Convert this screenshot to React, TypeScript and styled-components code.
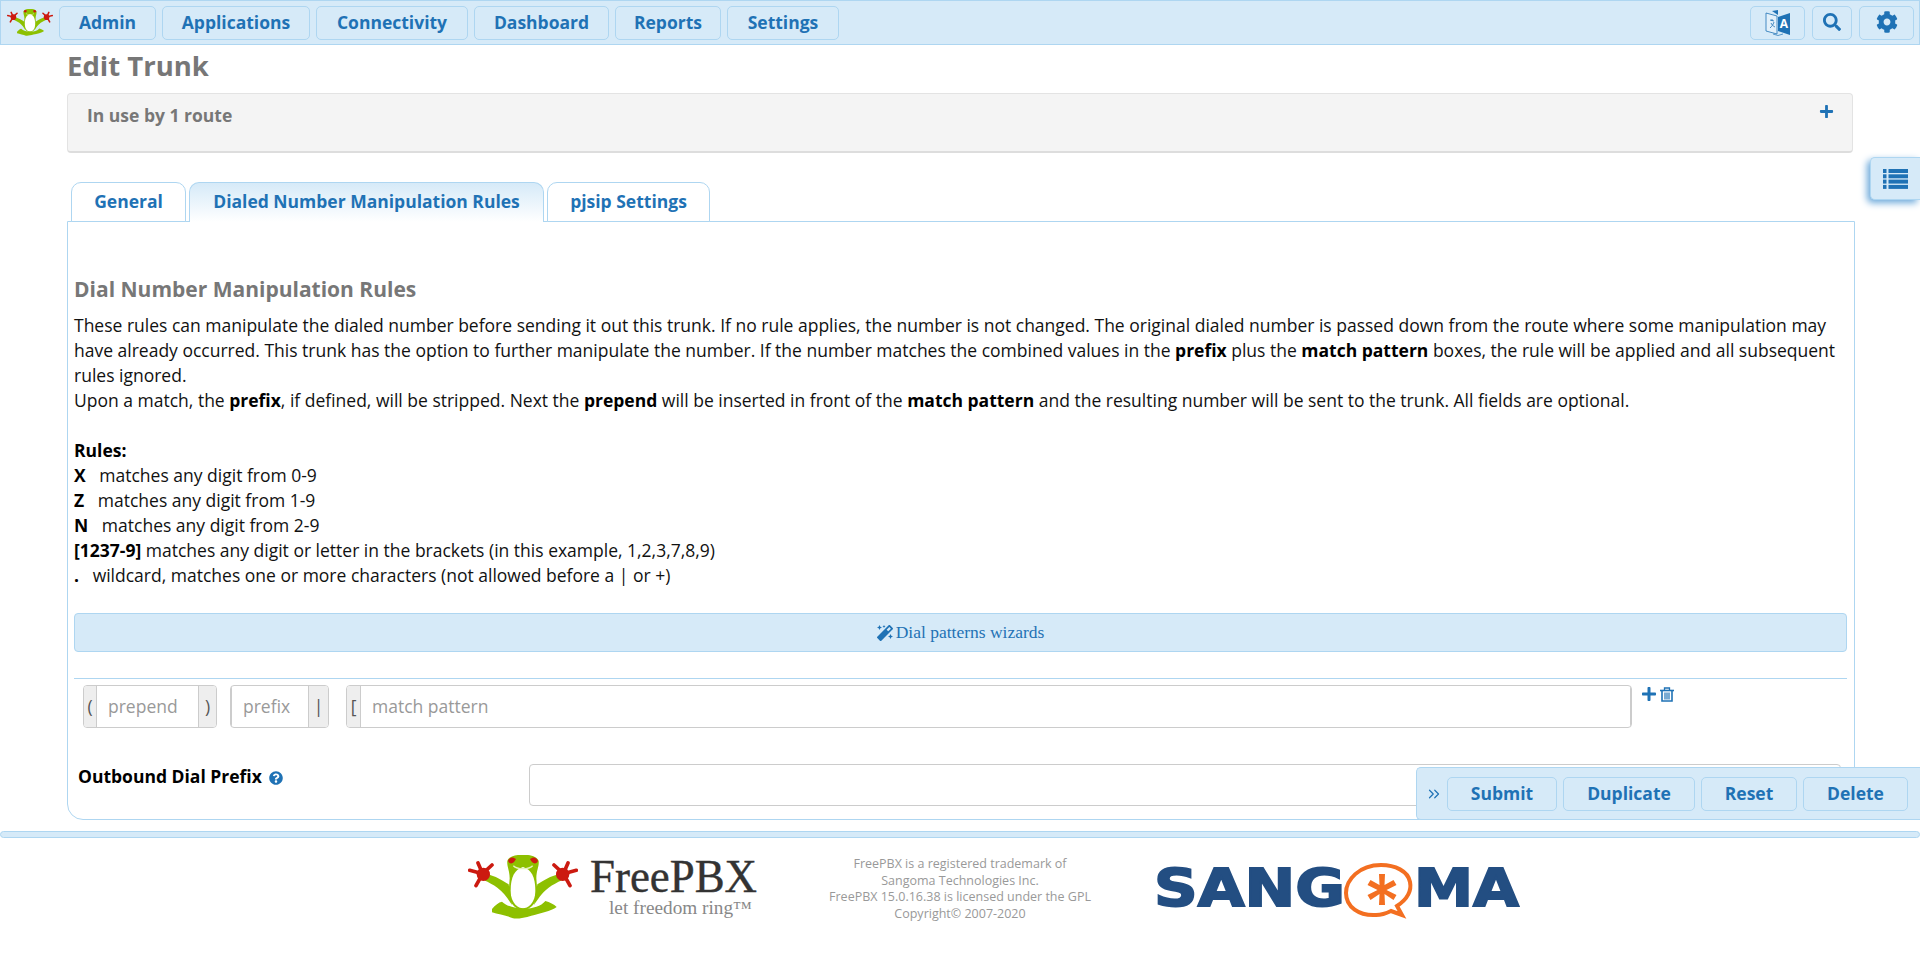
import React from 'react';
import styled, { createGlobalStyle } from 'styled-components';
import { ChevronsRight } from 'lucide-react';
import { FaCog, FaMagic, FaPlus, FaQuestionCircle, FaSearch } from 'react-icons/fa';

const blue = '#1f72b5';
const light = '#d6eaf8';
const line = '#aed6f1';

const GlobalStyle = createGlobalStyle`
	* { box-sizing: border-box; }
	html, body { margin: 0; padding: 0; background: #fff; }
	body {
		font-family: 'Open Sans', 'Liberation Sans', sans-serif;
		font-size: 17.5px;
		line-height: 25px;
		color: #111;
	}
`;

const Page = styled.div`
	position: relative;
	width: 1920px;
	height: 957px;
	overflow: hidden;
`;

const TopBar = styled.div`
	height: 45px;
	display: flex;
	align-items: center;
	padding: 0 5px 0 6px;
	background: ${light};
	border: 1px solid ${line};
`;

const Button = styled.button<{ $w: number }>`
	width: ${(p) => p.$w}px;
	height: 34px;
	padding: 0 0 2px;
	display: flex;
	align-items: center;
	justify-content: center;
	background: ${light};
	border: 1px solid ${line};
	border-radius: 5px;
	color: ${blue};
	font-family: inherit;
	font-size: 17.5px;
	font-weight: 700;
`;

const NavGroup = styled.div`
	display: flex;
	gap: 6px;
	margin-left: 6px;
`;

const RightGroup = styled.div`
	display: flex;
	gap: 7px;
	margin-left: auto;
`;

const Content = styled.div`
	width: 1788px;
	margin-left: 67px;
`;

const Title = styled.h1`
	height: 48px;
	margin: 0;
	font-size: 27.5px;
	line-height: 42px;
	font-weight: 700;
	color: #777;
`;

const InUse = styled.div`
	height: 60px;
	width: 1786px;
	display: flex;
	justify-content: space-between;
	padding: 9px 18px 9px 19px;
	background: #f4f4f4;
	border: 1px solid #e3e3e3;
	border-bottom: 2px solid #ddd;
	border-radius: 4px;
	color: #777;
	font-weight: 700;
	svg { color: ${blue}; font-size: 15px; margin-top: 1px; }
`;

const Tabs = styled.div`
	display: flex;
	gap: 3px;
	margin: 29px 0 0 4px;
	height: 39px;
`;

const Tab = styled.div<{ $w: number; $active?: boolean }>`
	width: ${(p) => p.$w}px;
	height: 40px;
	padding-bottom: 2px;
	display: flex;
	align-items: center;
	justify-content: center;
	border: 1px solid ${line};
	border-bottom: ${(p) => (p.$active ? 'none' : `1px solid ${line}`)};
	border-radius: 10px 10px 0 0;
	background: ${(p) => (p.$active ? `linear-gradient(${light}, #fff)` : '#fff')};
	color: ${blue};
	font-weight: 700;
	position: relative;
`;

const TabPanel = styled.div`
	height: 599px;
	padding: 0 7px 0 6px;
	border: 1px solid ${line};
	border-radius: 0 0 0 16px;
`;

const Heading = styled.h3`
	margin: 53px 0 0;
	font-size: 21px;
	line-height: 28px;
	font-weight: 700;
	color: #777;
`;

const Help = styled.div`
	margin-top: 10px;
	width: 1772px;
	b { font-weight: 700; color: #000; }
`;

const WizardBar = styled.div`
	height: 39px;
	margin-top: 25px;
	display: flex;
	align-items: center;
	justify-content: center;
	gap: 3px;
	background: ${light};
	border: 1px solid ${line};
	border-radius: 4px;
	color: ${blue};
	font-family: 'Liberation Serif', serif;
	font-size: 17.5px;
`;

const PatternRow = styled.div`
	margin-top: 26px;
	border-top: 1px solid ${line};
	padding: 6px 0 0 9px;
	display: flex;
	align-items: flex-start;
`;

const InputGroup = styled.div<{ $w: number; $gap: number }>`
	width: ${(p) => p.$w}px;
	margin-right: ${(p) => p.$gap}px;
	height: 43px;
	display: flex;
	border: 1px solid #ccc;
	border-radius: 4px;
	overflow: hidden;
`;

const Addon = styled.span<{ $w: number }>`
	width: ${(p) => p.$w}px;
	flex: none;
	display: flex;
	align-items: center;
	justify-content: center;
	background: #eee;
	color: #555;
`;

const Placeholder = styled.span`
	flex: 1;
	min-width: 0;
	display: flex;
	align-items: center;
	padding: 0 11px;
	color: #999;
	border-left: 1px solid #ccc;
	border-right: 1px solid #ccc;
	white-space: nowrap;
`;

const RowIcons = styled.div`
	display: flex;
	align-items: center;
	gap: 3px;
	margin: 1px 0 0 9px;
	color: ${blue};
	font-size: 16px;
`;

const FieldRow = styled.div`
	display: flex;
	margin-top: 36px;
`;

const Label = styled.div`
	width: 455px;
	padding: 0 0 0 4px;
	display: flex;
	align-items: flex-start;
	gap: 7px;
	font-weight: 700;
	color: #000;
	svg { color: ${blue}; font-size: 14px; margin-top: 7px; }
`;

const TextBox = styled.div`
	width: 1312px;
	height: 42px;
	border: 1px solid #ccc;
	border-radius: 4px;
`;

const ActionBar = styled.div`
	position: absolute;
	top: 767px;
	left: 1416px;
	width: 504px;
	height: 53px;
	display: flex;
	align-items: center;
	gap: 6px;
	padding-left: 30px;
	background: ${light};
	border: 1px solid ${line};
	border-right: none;
	border-radius: 5px 0 0 5px;
`;

const Chevron = styled.span`
	position: absolute;
	left: 8px;
	top: 17px;
	display: flex;
	color: ${blue};
`;

const SideTab = styled.div`
	position: absolute;
	top: 157px;
	left: 1870px;
	width: 50px;
	height: 43px;
	display: flex;
	align-items: center;
	justify-content: center;
	background: ${light};
	border: 1px solid ${line};
	border-right: none;
	border-radius: 5px 0 0 5px;
	box-shadow: -3px 3px 7px #6eaadb;
`;

const FooterLine = styled.div`
	height: 7px;
	margin-top: 11px;
	background: ${light};
	border: 1px solid ${line};
	border-radius: 4px;
`;

const Footer = styled.div`
	display: flex;
	margin-left: 466px;
	padding-top: 17px;
`;

const Legal = styled.div`
	width: 290px;
	margin: 1px 0 0 57px;
	text-align: center;
	font-size: 12.5px;
	line-height: 16.5px;
	color: #999;
	white-space: nowrap;
`;

const SangomaLogo = styled.svg`
	margin: 8px 0 0 49px;
`;

const LanguageIcon = () => (
	<svg width="30" height="30" viewBox="0 0 30 30">
		<path d="M3 6 L14 9 V27 L3 24 Z" fill="#fff" fillOpacity="0.3" stroke={blue} strokeWidth="0.8" />
		<path d="M7 13 l4 1 M9 12 l0 2 M11 15 c-1 3 -2 4 -4 6 M8 16 c1 2 2 3 4 4" fill="none" stroke={blue} strokeWidth="0.8" />
		<path d="M15 8 L27 4 V26 L15 22 Z" fill={blue} transform="translate(0 2)" />
		<path d="M9 4 L15 8 V3 Z" fill={blue} />
		<text x="21" y="21" textAnchor="middle" fontSize="12" fontWeight="700" fill="#fff" fontFamily="'Open Sans', sans-serif">A</text>
		<path d="M10 27 q5 3 10 0" fill="none" stroke={blue} strokeWidth="0.7" />
	</svg>
);

const ListIcon = () => (
	<svg width="25" height="20" viewBox="0 0 25 20" fill={blue}>
		<rect x="0" y="0" width="3.5" height="4" />
		<rect x="5.5" y="0" width="19.5" height="4" />
		<rect x="0" y="5.3" width="3.5" height="4" />
		<rect x="5.5" y="5.3" width="19.5" height="4" />
		<rect x="0" y="10.6" width="3.5" height="4" />
		<rect x="5.5" y="10.6" width="19.5" height="4" />
		<rect x="0" y="15.9" width="3.5" height="4" />
		<rect x="5.5" y="15.9" width="19.5" height="4" />
	</svg>
);

const TrashIcon = () => (
	<svg width="14" height="15" viewBox="0 0 14 15" fill="none" stroke={blue}>
		<path d="M0 3.5 H14" strokeWidth="1.6" />
		<path d="M4.5 3 V1 H9.5 V3" strokeWidth="1.3" />
		<path d="M2 4 V14 H12 V4" strokeWidth="1.6" />
		<path d="M5 5.5 V12.5 M7 5.5 V12.5 M9 5.5 V12.5" strokeWidth="1.2" />
	</svg>
);

const FrogSide = ({ flip }: { flip?: boolean }) => (
	<g transform={flip ? 'translate(330 0) scale(-1 1)' : undefined}>
		<path d="M58 58 C80 62 105 78 122 88 L132 150 C122 135 108 112 88 98 C76 90 62 82 48 76 Z" fill="#8dc000" />
		<g stroke="#cc1a10" strokeLinecap="round" fill="none" strokeWidth="11">
			<path d="M44 56 L30 24 M44 56 L72 30 M44 56 L5 46 M44 56 L24 92" />
		</g>
		<circle cx="46" cy="58" r="20" fill="#cc1a10" />
	</g>
);

const Frog = ({ width, height }: { width: number; height: number }) => (
	<svg width={width} height={height} viewBox="0 0 330 192" preserveAspectRatio="none">
		<FrogSide />
		<FrogSide flip />
		<path d="M165 0 C185 -2 208 4 212 18 C214 34 205 46 205 70 L208 110 C208 150 180 165 165 165 C150 165 122 150 122 110 L125 70 C125 46 116 34 118 18 C122 4 145 -2 165 0 Z" fill="#8dc000" />
		<path d="M120 18 C124 6 134 4 144 12 C138 24 128 32 120 18 Z M210 18 C206 6 196 4 186 12 C192 24 202 32 210 18 Z" fill="#cc1a10" />
		<path d="M165 36 C140 44 128 64 128 108 C128 146 152 160 165 160 C178 160 202 146 202 108 C202 64 190 44 165 36 Z" fill="#fff" />
		<path d="M136 32 C148 44 182 44 194 32" fill="none" stroke="#e4f2bc" strokeWidth="4" />
		<path d="M72 162 C82 150 92 142 102 140 C125 164 205 172 232 138 C245 142 258 148 266 156 C250 168 215 176 190 182 C170 188 150 192 135 190 C120 182 90 178 72 172 Z" fill="#8dc000" />
	</svg>
);

const FreePBXLogo = () => (
	<svg width="292" height="68" viewBox="0 0 292 68">
		<svg x="2" y="0" width="110" height="64" viewBox="0 0 110 64">
			<Frog width={110} height={64} />
		</svg>
		<text x="124" y="37" fontFamily="'Liberation Serif', serif" fontSize="46" fill="#333" stroke="#333" strokeWidth="0.4" textLength="167" lengthAdjust="spacingAndGlyphs">FreePBX</text>
		<text x="143" y="59" fontFamily="'Liberation Serif', serif" fontSize="18" fill="#888" textLength="143" lengthAdjust="spacingAndGlyphs">let freedom ring™</text>
	</svg>
);

const Sangoma = () => (
	<SangomaLogo width="366" height="56" viewBox="0 0 366 56">
		<g fontFamily="'DejaVu Sans', sans-serif" fontWeight="700" fontSize="51" fill="#234e82" stroke="#234e82" strokeWidth="1.8">
			<text x="0" y="43" textLength="191" lengthAdjust="spacingAndGlyphs">SANG</text>
			<text x="260" y="43" textLength="105" lengthAdjust="spacingAndGlyphs">MA</text>
		</g>
		<path d="M227 2 C205 2 192 17 192 30 C192 44 205 53 222 52 C228 52 233 50 237 48 L248 52 L243 43 C252 37 258 29 256 19 C254 8 241 2 227 2 Z" fill="#fff" stroke="#f36f21" strokeWidth="4" />
		<path d="M225 11 h6 l-0.5 11 l9 -5 l3 5 l-10 5 l10 5 l-3 5 l-9 -6 l0.5 11 h-6 l0.5 -11 l-9 6 l-3 -5 l10 -5 l-10 -5 l3 -5 l9 5 Z" fill="#f36f21" />
	</SangomaLogo>
);

const App = () => {
	return (
		<Page>
			<GlobalStyle />
			<TopBar>
				<Frog width={46} height={27} />
				<NavGroup>
					<Button $w={97}>Admin</Button>
					<Button $w={148}>Applications</Button>
					<Button $w={152}>Connectivity</Button>
					<Button $w={135}>Dashboard</Button>
					<Button $w={106}>Reports</Button>
					<Button $w={112}>Settings</Button>
				</NavGroup>
				<RightGroup>
					<Button $w={55}><LanguageIcon /></Button>
					<Button $w={40}><FaSearch size={18} /></Button>
					<Button $w={55}><FaCog size={22} /></Button>
				</RightGroup>
			</TopBar>
			<Content>
				<Title>Edit Trunk</Title>
				<InUse>
					In use by 1 route
					<FaPlus />
				</InUse>
				<Tabs>
					<Tab $w={115}>General</Tab>
					<Tab $w={355} $active>Dialed Number Manipulation Rules</Tab>
					<Tab $w={163}>pjsip Settings</Tab>
				</Tabs>
				<TabPanel>
					<Heading>Dial Number Manipulation Rules</Heading>
					<Help>
						These rules can manipulate the dialed number before sending it out this trunk. If no rule applies, the number is not changed. The original dialed number is passed down from the route where some manipulation may have already occurred. This trunk has the option to further manipulate the number. If the number matches the combined values in the <b>prefix</b> plus the <b>match pattern</b> boxes, the rule will be applied and all subsequent rules ignored.
						<br />
						Upon a match, the <b>prefix</b>, if defined, will be stripped. Next the <b>prepend</b> will be inserted in front of the <b>match pattern</b> and the resulting number will be sent to the trunk. All fields are optional.
						<br />
						<br />
						<b>Rules:</b>
						<br />
						<b>X</b>&nbsp;&nbsp; matches any digit from 0-9
						<br />
						<b>Z</b>&nbsp;&nbsp; matches any digit from 1-9
						<br />
						<b>N</b>&nbsp;&nbsp; matches any digit from 2-9
						<br />
						<b>[1237-9]</b> matches any digit or letter in the brackets (in this example, 1,2,3,7,8,9)
						<br />
						<b>.</b>&nbsp;&nbsp; wildcard, matches one or more characters (not allowed before a | or +)
					</Help>
					<WizardBar>
						<FaMagic size={16} />
						Dial patterns wizards
					</WizardBar>
					<PatternRow>
						<InputGroup $w={134} $gap={13}>
							<Addon $w={12}>(</Addon>
							<Placeholder>prepend</Placeholder>
							<Addon $w={17}>)</Addon>
						</InputGroup>
						<InputGroup $w={99} $gap={17}>
							<Placeholder>prefix</Placeholder>
							<Addon $w={19}>|</Addon>
						</InputGroup>
						<InputGroup $w={1286} $gap={0}>
							<Addon $w={13}>[</Addon>
							<Placeholder>match pattern</Placeholder>
						</InputGroup>
						<RowIcons>
							<FaPlus />
							<TrashIcon />
						</RowIcons>
					</PatternRow>
					<FieldRow>
						<Label>
							Outbound Dial Prefix
							<FaQuestionCircle />
						</Label>
						<TextBox />
					</FieldRow>
				</TabPanel>
			</Content>
			<FooterLine />
			<Footer>
				<FreePBXLogo />
				<Legal>
					FreePBX is a registered trademark of
					<br />
					Sangoma Technologies Inc.
					<br />
					FreePBX 15.0.16.38 is licensed under the GPL
					<br />
					Copyright© 2007-2020
				</Legal>
				<Sangoma />
			</Footer>
			<SideTab><ListIcon /></SideTab>
			<ActionBar>
				<Chevron><ChevronsRight size={18} strokeWidth={1.6} /></Chevron>
				<Button $w={110}>Submit</Button>
				<Button $w={132}>Duplicate</Button>
				<Button $w={96}>Reset</Button>
				<Button $w={105}>Delete</Button>
			</ActionBar>
		</Page>
	);
};

export default App;
